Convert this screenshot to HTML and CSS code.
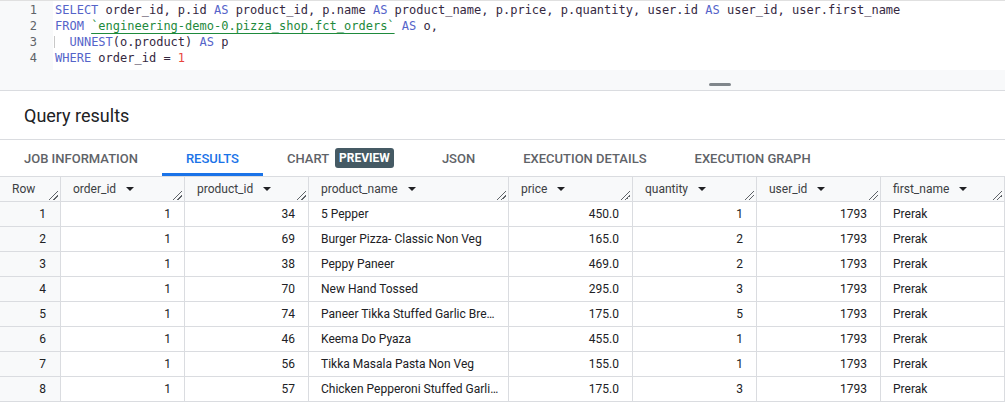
FILE: index.html
```html
<!DOCTYPE html>
<html lang="en">
<head>
<meta charset="utf-8">
<title>Query results</title>
<link rel="stylesheet" href="styles.css">
</head>
<body>
<div class="editor">
  <div class="editor-main">
    <div class="gutter">
      <div class="ln">1</div>
      <div class="ln">2</div>
      <div class="ln">3</div>
      <div class="ln">4</div>
    </div>
    <div class="code">
      <div class="cl"><span class="kw">SELECT</span> order_id, p.id <span class="kw">AS</span> product_id, p.name <span class="kw">AS</span> product_name, p.price, p.quantity, user.id <span class="kw">AS</span> user_id, user.first_name</div>
      <div class="cl"><span class="kw">FROM</span> <span class="str">`engineering-demo-0.pizza_shop.fct_orders`</span> <span class="kw">AS</span> o,</div>
      <div class="cl"><span class="guide"></span>  <span class="kw">UNNEST</span>(o.product) <span class="kw">AS</span> p</div>
      <div class="cl"><span class="kw">WHERE</span> order_id <span class="op">=</span> <span class="num">1</span></div>
    </div>
  </div>
  <div class="editor-foot"><span class="handle"></span></div>
</div>

<div class="results-head">Query results</div>

<nav class="tabs">
  <div class="tab">JOB INFORMATION</div>
  <div class="tab active">RESULTS</div>
  <div class="tab">CHART <span class="badge">PREVIEW</span></div>
  <div class="tab">JSON</div>
  <div class="tab">EXECUTION DETAILS</div>
  <div class="tab">EXECUTION GRAPH</div>
</nav>

<div class="grid">
  <div class="hc rowcol">Row<i class="rz"></i></div>
  <div class="hc">order_id<span class="arrow"></span><i class="rz"></i></div>
  <div class="hc">product_id<span class="arrow"></span><i class="rz"></i></div>
  <div class="hc">product_name<span class="arrow"></span><i class="rz"></i></div>
  <div class="hc">price<span class="arrow"></span><i class="rz"></i></div>
  <div class="hc">quantity<span class="arrow"></span><i class="rz"></i></div>
  <div class="hc">user_id<span class="arrow"></span><i class="rz"></i></div>
  <div class="hc">first_name<span class="arrow"></span><i class="rz"></i></div>

  <div class="c rn">1</div><div class="c n">1</div><div class="c n">34</div><div class="c">5 Pepper</div><div class="c n">450.0</div><div class="c n">1</div><div class="c n">1793</div><div class="c">Prerak</div>
  <div class="c rn">2</div><div class="c n">1</div><div class="c n">69</div><div class="c">Burger Pizza- Classic Non Veg</div><div class="c n">165.0</div><div class="c n">2</div><div class="c n">1793</div><div class="c">Prerak</div>
  <div class="c rn">3</div><div class="c n">1</div><div class="c n">38</div><div class="c">Peppy Paneer</div><div class="c n">469.0</div><div class="c n">2</div><div class="c n">1793</div><div class="c">Prerak</div>
  <div class="c rn">4</div><div class="c n">1</div><div class="c n">70</div><div class="c">New Hand Tossed</div><div class="c n">295.0</div><div class="c n">3</div><div class="c n">1793</div><div class="c">Prerak</div>
  <div class="c rn">5</div><div class="c n">1</div><div class="c n">74</div><div class="c">Paneer Tikka Stuffed Garlic Bread</div><div class="c n">175.0</div><div class="c n">5</div><div class="c n">1793</div><div class="c">Prerak</div>
  <div class="c rn">6</div><div class="c n">1</div><div class="c n">46</div><div class="c">Keema Do Pyaza</div><div class="c n">455.0</div><div class="c n">1</div><div class="c n">1793</div><div class="c">Prerak</div>
  <div class="c rn">7</div><div class="c n">1</div><div class="c n">56</div><div class="c">Tikka Masala Pasta Non Veg</div><div class="c n">155.0</div><div class="c n">1</div><div class="c n">1793</div><div class="c">Prerak</div>
  <div class="c rn">8</div><div class="c n">1</div><div class="c n">57</div><div class="c">Chicken Pepperoni Stuffed Garlic Bread</div><div class="c n">175.0</div><div class="c n">3</div><div class="c n">1793</div><div class="c">Prerak</div>
</div>
</body>
</html>
```

FILE: styles.css
```css
html, body {
  margin: 0;
  padding: 0;
  background: #fff;
  font-family: Roboto, "Liberation Sans", Arial, sans-serif;
  color: #202124;
  overflow: hidden;
}

/* ---------- editor ---------- */
.editor {
  border-top: 1px solid #e0e0e0;
  border-bottom: 1px solid #dadce0;
  background: #f8f9fa;
}
.editor-main {
  display: flex;
}
.gutter {
  width: 53px;
  box-sizing: border-box;
  padding: 1px 16px 0 0;
  text-align: right;
  font-family: "DejaVu Sans Mono", "Liberation Mono", monospace;
  font-size: 12px;
  line-height: 16px;
  color: #5f6368;
}
.code {
  flex: 1;
  background: #fff;
  padding: 1px 0 4px 2px;
  font-family: "DejaVu Sans Mono", "Liberation Mono", monospace;
  font-size: 12px;
  line-height: 16px;
  color: #35283f;
}
.cl { height: 16px; position: relative; white-space: pre; }
.kw { color: #5564c9; }
.str {
  color: #1e8a3c;
  text-decoration: underline;
  text-decoration-color: #1e8a3c;
  text-underline-offset: 3px;
}
.num { color: #e8453c; }
.op { color: #35283f; }
.guide {
  position: absolute;
  left: -1px;
  top: 2px;
  height: 12px;
  border-left: 1px solid #c8c8c8;
}
.editor-foot {
  height: 20px;
  display: flex;
  justify-content: center;
  align-items: flex-end;
  padding-left: 435px;
  box-sizing: border-box;
}
.handle {
  width: 22px;
  height: 3px;
  border-radius: 2px;
  background: #80868b;
  margin-bottom: 4px;
}

/* ---------- results header ---------- */
.results-head {
  height: 48px;
  display: flex;
  align-items: center;
  padding-left: 24px;
  font-size: 18px;
  color: #202124;
  border-bottom: 1px solid #dadce0;
}

/* ---------- tabs ---------- */
.tabs {
  display: flex;
  height: 36px;
}
.tab {
  display: flex;
  align-items: center;
  padding: 0 24px;
  font-size: 13px;
  font-weight: 500;
  color: #5f6368;
  box-sizing: border-box;
  border-bottom: 3px solid transparent;
  padding-top: 3px;
}
.tab.active {
  color: #1a73e8;
  border-bottom-color: #1a73e8;
}
.badge {
  margin-left: 6px;
  background: #455a64;
  color: #fff;
  font-weight: 700;
  border-radius: 3px;
  padding: 0 4px;
  height: 20px;
  line-height: 20px;
  font-size: 12px;
}

/* ---------- grid ---------- */
.grid {
  display: grid;
  grid-template-columns: 61px 124px 124px 200px 124px 124px 124px 1fr;
  grid-auto-rows: 25px;
  border-top: 1px solid #dadce0;
  font-size: 12px;
}
.hc, .c {
  box-sizing: border-box;
  border-right: 1px solid #dadce0;
  border-bottom: 1px solid #dadce0;
  display: flex;
  align-items: center;
  padding: 0 12px;
  white-space: nowrap;
  overflow: hidden;
  min-width: 0;
}
.hc {
  position: relative;
  background: #f8f9fa;
  color: #3c4043;
}
.rowcol { background: #f8f9fa; }
.arrow {
  margin-left: 10px;
  width: 0;
  height: 0;
  border-left: 4px solid transparent;
  border-right: 4px solid transparent;
  border-top: 4px solid #202124;
}
.rz {
  position: absolute;
  right: 2px;
  bottom: 1px;
  width: 9px;
  height: 9px;
  background:
    linear-gradient(135deg, transparent 0 47%, #5f6368 47% 55%, transparent 55% 100%) 0 0 / 9px 9px no-repeat,
    linear-gradient(135deg, transparent 0 47%, #5f6368 47% 60%, transparent 60% 100%) 4px 4px / 5px 5px no-repeat;
}
.c {
  color: #202124;
  background: #fff;
}
.c:not(.n):not(.rn) {
  display: block;
  line-height: 24px;
  text-overflow: ellipsis;
  padding-right: 9px;
}
.n { justify-content: flex-end; padding-right: 13px; }
.rn { justify-content: flex-end; padding-right: 14px; background: #f8f9fa; }
```
